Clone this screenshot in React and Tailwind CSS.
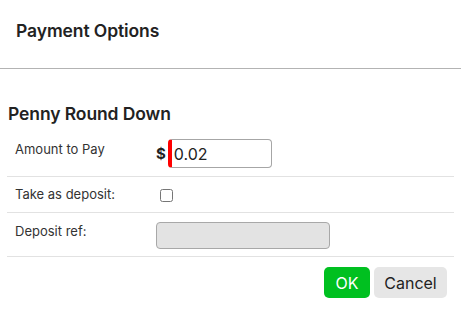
import { useState } from "react";

const App = () => {
  const [amount, setAmount] = useState("0.02");
  const [deposit, setDeposit] = useState(false);

  return (
    <div className="w-[461px] h-[316px] bg-white text-[#222] font-['Inter',sans-serif] overflow-hidden">
      {/* Header */}
      <div className="h-[69px] border-b border-[#b3b3b3] flex items-center pl-4">
        <h1 className="text-[17.5px] font-semibold tracking-[-0.1px] mt-[-6px]">Payment Options</h1>
      </div>

      <div className="px-[7px]">
        <h2 className="text-[17.5px] font-semibold pt-[33px] leading-[24px] pl-[1px] tracking-[-0.1px]">Penny Round Down</h2>

        {/* Amount row */}
        <div className="flex items-start h-[52px] pt-[14px] border-b border-[#e2e2e2] mt-[-1px]">
          <div className="w-[149px] pl-2 text-[13px] leading-[20px] text-[#333]">Amount to Pay</div>
          <div className="flex items-center">
            <span className="text-[15px] font-bold mr-[2px] mt-[2px]">$</span>
            <input
              value={amount}
              onChange={(e) => setAmount(e.target.value)}
              className="w-[104px] h-[29px] border border-[#a6a6a6] border-l-[4px] border-l-[#ff0000] rounded-[4px] pl-[2px] text-[16px] text-[#222] outline-none"
            />
          </div>
        </div>

        {/* Deposit checkbox row */}
        <div className="flex items-center h-[36px] border-b border-[#e2e2e2]">
          <div className="w-[153px] pl-2 text-[13px] text-[#333]">Take as deposit:</div>
          <input
            type="checkbox"
            checked={deposit}
            onChange={(e) => setDeposit(e.target.checked)}
            className="w-[13px] h-[13px] m-0 mt-[1px]"
          />
        </div>

        {/* Deposit ref row */}
        <div className="flex items-center h-[44px] border-b border-[#e2e2e2]">
          <div className="w-[149px] pl-2 text-[13px] text-[#333] mt-[-6px]">Deposit ref:</div>
          <input
            disabled
            className="w-[174px] h-[27px] bg-[#e3e3e3] border border-[#a8a8a8] rounded-[4px] mt-[2px]"
          />
        </div>

        {/* Buttons */}
        <div className="flex justify-end gap-[4px] pt-[10px] pr-[7px]">
          <button className="h-[31px] w-[46px] bg-[#00c020] text-white text-[16px] rounded-[5px]">OK</button>
          <button className="h-[31px] w-[73px] bg-[#e6e6e6] text-[#222] text-[16px] rounded-[5px]">Cancel</button>
        </div>
      </div>
    </div>
  );
};

export default App;
